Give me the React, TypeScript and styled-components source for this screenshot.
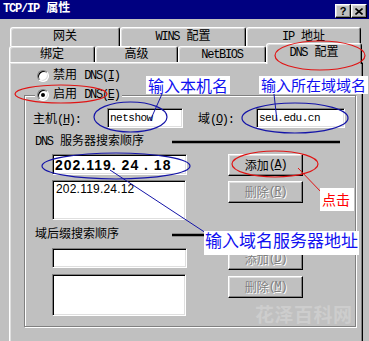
import styled, { createGlobalStyle, css } from "styled-components";

const GlobalStyle = createGlobalStyle`
  html, body {
    margin: 0;
    padding: 0;
    background: #c0c0c0;
  }
`;

const CJK = `"Noto Sans CJK SC", sans-serif`;

const Window = styled.div`
  position: relative;
  width: 369px;
  height: 341px;
  overflow: hidden;
  background: #c0c0c0;
  font-family: "Liberation Mono", "Noto Sans CJK SC", monospace;
  font-size: 12px;
  color: #000;
`;

const TitleBar = styled.div`
  height: 19px;
  background: #000080;
  display: flex;
  align-items: center;
  justify-content: space-between;
  padding: 0 2px 0 3px;
  box-sizing: border-box;
`;

const Title = styled.span`
  color: #fff;
  font-weight: bold;
  line-height: 19px;
`;

const Lat = styled.span<{ $ls?: number }>`
  font-family: "Liberation Mono", monospace;
  letter-spacing: ${(p) => p.$ls ?? -1.3}px;
`;

const CaptionButtons = styled.div`
  display: flex;
  margin-top: 3px;
`;

const CaptionButton = styled.div`
  box-sizing: border-box;
  width: 16px;
  height: 14px;
  background: #c0c0c0;
  border: 1px solid;
  border-color: #fff #000 #000 #fff;
  box-shadow: inset -1px -1px #808080, inset 1px 1px #dfdfdf;
  display: flex;
  align-items: center;
  justify-content: center;
  font: bold 11px "Liberation Sans", sans-serif;
`;

const TabStrip = styled.div`
  padding-top: 8px;
`;

const TabRow = styled.div<{ $offset: number; $h: number; $z: number }>`
  display: flex;
  align-items: flex-end;
  margin-left: ${(p) => p.$offset}px;
  height: ${(p) => p.$h}px;
  position: relative;
  z-index: ${(p) => p.$z};
`;

const Tab = styled.div<{ $w: number; $active?: boolean }>`
  box-sizing: border-box;
  width: ${(p) => p.$w}px;
  height: ${(p) => (p.$active ? "21px" : "100%")};
  margin-bottom: ${(p) => (p.$active ? "-2px" : "0")};
  padding-bottom: ${(p) => (p.$active ? "3px" : "0")};
  background: #c0c0c0;
  border: 1px solid;
  border-color: #fff #000 transparent #fff;
  border-bottom: 0;
  border-radius: 3px 3px 0 0;
  box-shadow: inset 1px 1px #dfdfdf, inset -1px 0 #808080;
  display: flex;
  align-items: center;
  justify-content: center;
  line-height: 14px;
  white-space: nowrap;
`;

const Panel = styled.div`
  box-sizing: border-box;
  margin-left: 9px;
  width: 354px;
  height: 290px;
  padding-top: 5px;
  border: 1px solid;
  border-color: #fff #000 #000 #fff;
  box-shadow: inset 1px 1px #dfdfdf, inset -1px -1px #808080;
`;

const RadioRow = styled.label<{ $indent?: number }>`
  display: flex;
  align-items: center;
  gap: 4px;
  height: 16px;
  margin-left: ${(p) => p.$indent ?? 0}px;
  line-height: 16px;
  white-space: nowrap;
`;

const Radio = styled.span<{ $checked?: boolean }>`
  box-sizing: border-box;
  position: relative;
  width: 12px;
  height: 12px;
  border-radius: 50%;
  background: #fff;
  border: 1px solid;
  border-color: #808080 #fff #fff #808080;
  box-shadow: inset 1px 1px #000, inset -1px -1px #dfdfdf;
  &::after {
    content: "";
    display: ${(p) => (p.$checked ? "block" : "none")};
    position: absolute;
    left: 3px;
    top: 3px;
    width: 4px;
    height: 4px;
    border-radius: 50%;
    background: #000;
  }
`;

const GroupBox = styled.fieldset`
  margin: 3px 6px 0 14px;
  padding: 0 0 10px 8px;
  min-width: 0;
  border: 1px solid #808080;
  box-shadow: inset 1px 1px #fff, 1px 1px #fff;
`;

const Legend = styled.legend`
  margin-left: 2px;
  padding: 0 2px;
  background: #c0c0c0;
`;

const FieldRow = styled.div`
  display: flex;
  align-items: center;
  height: 20px;
  margin-top: 5px;
`;

const FieldLabel = styled.span<{ $w: number; $gap?: number }>`
  width: ${(p) => p.$w}px;
  margin-left: ${(p) => p.$gap ?? 0}px;
  white-space: nowrap;
`;

const sunken = css`
  box-sizing: border-box;
  background: #fff;
  border: 1px solid;
  border-color: #808080 #fff #fff #808080;
  box-shadow: inset 1px 1px #000, inset -1px -1px #dfdfdf;
`;

const TextBox = styled.div<{ $w: number; $h?: number }>`
  ${sunken};
  width: ${(p) => p.$w}px;
  height: ${(p) => p.$h ?? 20}px;
  padding-left: 2px;
  display: flex;
  align-items: center;
  font-family: "Liberation Mono", monospace;
  font-size: 11px;
  letter-spacing: -0.5px;
`;

const IpBox = styled.div`
  ${sunken};
  width: 135px;
  height: 21px;
  padding-left: 2px;
  display: flex;
  align-items: center;
  font: bold 14px "Liberation Sans", sans-serif;
  letter-spacing: 1px;
  white-space: pre;
`;

const ListBox = styled.div<{ $h: number }>`
  ${sunken};
  width: 134px;
  height: ${(p) => p.$h}px;
  padding: 2px 3px;
  font: 12px/13px "Liberation Sans", sans-serif;
  letter-spacing: 0.2px;
`;

const SectionLabel = styled.div<{ $top: number }>`
  margin: ${(p) => p.$top}px 0 0 2px;
  line-height: 14px;
`;

const Columns = styled.div<{ $top: number }>`
  display: flex;
  gap: 41px;
  margin: ${(p) => p.$top}px 0 0 19px;
`;

const Column = styled.div<{ $gap: number }>`
  display: flex;
  flex-direction: column;
  gap: ${(p) => p.$gap}px;
`;

const Button = styled.div<{ $disabled?: boolean }>`
  box-sizing: border-box;
  width: 75px;
  height: 22px;
  background: #c0c0c0;
  border: 1px solid;
  border-color: #fff #000 #000 #fff;
  box-shadow: inset -1px -1px #808080, inset 1px 1px #dfdfdf;
  display: flex;
  align-items: center;
  justify-content: center;
  white-space: nowrap;
  color: ${(p) => (p.$disabled ? "#808080" : "#000")};
  text-shadow: ${(p) => (p.$disabled ? "1px 1px #fff" : "none")};
`;

const Overlay = styled.svg`
  position: absolute;
  left: 0;
  top: 0;
  pointer-events: none;
  z-index: 5;
`;

const Note = styled.span<{ $x: number; $y: number; $size: number; $color: string }>`
  position: absolute;
  left: ${(p) => p.$x}px;
  top: ${(p) => p.$y}px;
  z-index: 6;
  background: #fff;
  color: ${(p) => p.$color};
  font-family: ${CJK};
  font-size: ${(p) => p.$size}px;
  line-height: 18px;
  white-space: nowrap;
`;

const Watermark = styled.span`
  position: absolute;
  left: 255px;
  top: 300px;
  z-index: 1;
  color: #cdcdcd;
  font: bold 19px ${CJK};
  letter-spacing: 0.5px;
`;

const BLUE = "#1414a8";
const RED = "#e01414";

export default function App() {
  return (
    <Window>
      <GlobalStyle />
      <TitleBar>
        <Title>
          <Lat $ls={-1.2}>TCP/IP</Lat> 属性
        </Title>
        <CaptionButtons>
          <CaptionButton>?</CaptionButton>
          <CaptionButton>
            <svg width="8" height="7" viewBox="0 0 8 7">
              <path d="M0.5 0.5 L7.5 6.5 M7.5 0.5 L0.5 6.5" stroke="#000" strokeWidth="1.6" />
            </svg>
          </CaptionButton>
        </CaptionButtons>
      </TitleBar>

      <TabStrip>
        <TabRow $offset={10} $h={19} $z={1}>
          <Tab $w={110}>网关</Tab>
          <Tab $w={126}>
            <span>
              <Lat>WINS</Lat> 配置
            </span>
          </Tab>
          <Tab $w={115}>
            <span>
              <Lat>IP</Lat> 地址
            </span>
          </Tab>
        </TabRow>
        <TabRow $offset={9} $h={16} $z={2}>
          <Tab $w={86}>绑定</Tab>
          <Tab $w={83}>高级</Tab>
          <Tab $w={88}>
            <Lat>NetBIOS</Lat>
          </Tab>
          <Tab $w={96} $active>
            <span>
              <Lat>DNS</Lat> 配置
            </span>
          </Tab>
        </TabRow>
      </TabStrip>

      <Panel>
        <RadioRow $indent={27}>
          <Radio />
          <span>
            禁用 <Lat>DNS(<u>I</u>)</Lat>
          </span>
        </RadioRow>
        <GroupBox>
          <Legend>
            <RadioRow>
              <Radio $checked />
              <span>
                启用 <Lat>DNS(<u>E</u>)</Lat>
              </span>
            </RadioRow>
          </Legend>

          <FieldRow>
            <FieldLabel $w={74}>
              主机<Lat>(<u>H</u>):</Lat>
            </FieldLabel>
            <TextBox $w={76}>netshow</TextBox>
            <FieldLabel $w={58} $gap={15}>
              域<Lat>(<u>O</u>):</Lat>
            </FieldLabel>
            <TextBox $w={89}>seu.edu.cn</TextBox>
          </FieldRow>

          <SectionLabel $top={7}>
            <Lat>DNS</Lat> 服务器搜索顺序
          </SectionLabel>
          <Columns $top={5}>
            <Column $gap={5}>
              <IpBox>202.119. 24 . 18</IpBox>
              <ListBox $h={40}>202.119.24.12</ListBox>
            </Column>
            <Column $gap={5}>
              <Button>
                添加<Lat>(<u>A</u>)</Lat>
              </Button>
              <Button $disabled>
                删除<Lat>(<u>R</u>)</Lat>
              </Button>
            </Column>
          </Columns>

          <SectionLabel $top={8}>域后缀搜索顺序</SectionLabel>
          <Columns $top={6}>
            <Column $gap={6}>
              <TextBox $w={135} />
              <ListBox $h={42} />
            </Column>
            <Column $gap={6}>
              <Button $disabled>
                添加<Lat>(<u>D</u>)</Lat>
              </Button>
              <Button $disabled>
                删除<Lat>(<u>M</u>)</Lat>
              </Button>
            </Column>
          </Columns>
        </GroupBox>
      </Panel>

      <Watermark>花泽百科网</Watermark>

      <Overlay width="369" height="341" viewBox="0 0 369 341" fill="none">
        <ellipse cx="320" cy="55.5" rx="45" ry="14.5" stroke={RED} strokeWidth="1.2" />
        <ellipse cx="61" cy="94" rx="46" ry="9" stroke={RED} strokeWidth="1.2" />
        <ellipse cx="130.5" cy="117" rx="36.5" ry="15" stroke={BLUE} strokeWidth="1.2" />
        <ellipse cx="295" cy="118" rx="53" ry="15" stroke={BLUE} strokeWidth="1.2" />
        <ellipse cx="116" cy="166" rx="74" ry="13" stroke={BLUE} strokeWidth="1.2" />
        <ellipse cx="275" cy="164" rx="43" ry="13" stroke={RED} strokeWidth="1.2" />
        <line x1="162" y1="94" x2="150" y2="121" stroke={BLUE} strokeWidth="1" />
        <line x1="274" y1="94" x2="277" y2="121" stroke={BLUE} strokeWidth="1" />
        <line x1="110" y1="170" x2="206" y2="233" stroke={BLUE} strokeWidth="1" />
        <line x1="298" y1="168" x2="322" y2="193" stroke={RED} strokeWidth="1" />
        <line x1="172" y1="142" x2="340" y2="142" stroke="#000" strokeWidth="2.5" />
        <line x1="172" y1="235" x2="205" y2="235" stroke="#000" strokeWidth="2.5" />
      </Overlay>

      <Note $x={146} $y={76} $size={16} $color="#1010f0" style={{ padding: "0 2px" }}>
        输入本机名
      </Note>
      <Note $x={259} $y={76} $size={15} $color="#1010f0" style={{ padding: "0 2px" }}>
        输入所在域域名
      </Note>
      <Note $x={320} $y={188} $size={14} $color="#ff0000" style={{ padding: "2px 4px 3px 2px" }}>
        点击
      </Note>
      <Note $x={204} $y={231} $size={17} $color="#1010f0" style={{ padding: "0 1px 6px" }}>
        输入域名服务器地址
      </Note>
    </Window>
  );
}
